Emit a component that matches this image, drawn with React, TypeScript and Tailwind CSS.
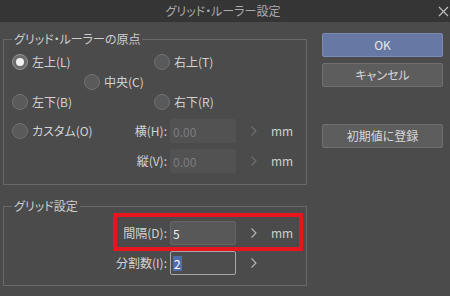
import React from "react";

const font = { fontFamily: '"Noto Sans CJK JP", "Noto Sans", sans-serif' };

function Radio({ label, checked = false }: { label: string; checked?: boolean }) {
  return (
    <div className="flex items-center gap-[4px] h-[20px]">
      <div
        className={
          "w-[16px] h-[16px] rounded-full border flex items-center justify-center " +
          (checked ? "bg-[#6c6c6c] border-[#959595]" : "bg-[#5a5a5a] border-[#717171]")
        }
      >
        {checked && <div className="w-[8px] h-[8px] rounded-full bg-[#f2f2f2]" />}
      </div>
      <span className="text-[12px] leading-[16px] text-[#d2d2d2]">{label}</span>
    </div>
  );
}

function Chevron({ color }: { color: string }) {
  return (
    <svg width="8" height="10" viewBox="0 0 8 10" className="shrink-0">
      <polyline points="1.5,0.5 6,5 1.5,9.5" fill="none" stroke={color} strokeWidth="1.2" />
    </svg>
  );
}

function Field({
  label,
  value,
  mm = true,
  variant,
}: {
  label: string;
  value: string;
  mm?: boolean;
  variant: "disabled" | "normal" | "focused";
}) {
  const box =
    variant === "disabled"
      ? "bg-[#525252] border-[#525252] text-[#7c7c7c]"
      : variant === "normal"
      ? "bg-[#585858] border-[#656565] text-[#f0f0f0]"
      : "bg-[#4d4d4d] border-[#a8a8a8] text-[#ffffff]";
  return (
    <div className="flex items-center h-[24px]">
      <div className="w-[164px] text-right text-[12px] leading-[16px] text-[#d2d2d2] pr-[1px]">
        {label}
      </div>
      <div className={"ml-[2px] w-[66px] h-[24px] border rounded-[2px] flex items-center pl-[2px] text-[12px] " + box}>
        {variant === "focused" ? (
          <span className="bg-[#4f6ea8] px-[1px] leading-[15px]">{value}</span>
        ) : (
          <span className="leading-[15px]">{value}</span>
        )}
      </div>
      <div className="ml-[14px]">
        <Chevron color={variant === "disabled" ? "#6e6e6e" : "#b4b4b4"} />
      </div>
      {mm && <span className="ml-[13px] text-[12px] leading-[16px] text-[#cfcfcf]">mm</span>}
    </div>
  );
}

function Group({ title, children, className = "" }: { title: string; children: React.ReactNode; className?: string }) {
  return (
    <div className={"relative border border-[#686868] " + className}>
      <span className="absolute left-[8px] -top-[9px] px-[2px] bg-[#4b4b4b] text-[12px] leading-[16px] text-[#cdcdcd]">
        {title}
      </span>
      {children}
    </div>
  );
}

export default function App() {
  return (
    <div className="w-[450px] h-[296px] bg-[#4b4b4b] overflow-hidden [font-feature-settings:'palt']" style={font}>
      <div className="h-[22px] bg-[#353535] flex items-center justify-center relative">
        <span className="text-[12px] leading-[16px] text-[#ababab] ml-[-4px]">グリッド・ルーラー設定</span>
        <svg width="11" height="11" viewBox="0 0 11 11" className="absolute right-[1px] top-[6px]">
          <path d="M1 1 L10 10 M10 1 L1 10" stroke="#bdbdbd" strokeWidth="1.2" />
        </svg>
      </div>
      <div className="flex pl-[3px]">
        <div className="w-[304px]">
          <Group title="グリッド・ルーラーの原点" className="mt-[17px] h-[146px] pt-[12px] pl-[8px]">
            <div className="flex">
              <div className="w-[142px]">
                <Radio label="左上(L)" checked />
              </div>
              <Radio label="右上(T)" />
            </div>
            <div className="pl-[72px]">
              <Radio label="中央(C)" />
            </div>
            <div className="flex">
              <div className="w-[142px]">
                <Radio label="左下(B)" />
              </div>
              <Radio label="右下(R)" />
            </div>
            <div className="relative mt-[7px] -ml-[8px]">
              <Field label="横(H):" value="0.00" variant="disabled" />
              <div className="absolute left-[8px] top-[2px]">
                <Radio label="カスタム(O)" />
              </div>
            </div>
            <div className="mt-[6px] -ml-[8px]">
              <Field label="縦(V):" value="0.00" variant="disabled" />
            </div>
          </Group>
          <Group title="グリッド設定" className="mt-[21px] h-[80px] pt-[14px]">
            <Field label="間隔(D):" value="5" variant="normal" />
            <div className="mt-[6px]">
              <Field label="分割数(I):" value="2" mm={false} variant="focused" />
            </div>
            <div className="absolute left-[109px] top-[6px] w-[190px] h-[38px] border-[4px] border-[#e8151f]" />
          </Group>
        </div>
        <div className="ml-[15px] w-[121px] flex flex-col">
          <div className="mt-[11px] h-[24px] bg-[#6678a3] border border-[#7b8bb3] rounded-[2px] flex items-center justify-center text-[12px] text-[#e4e8f0]">
            OK
          </div>
          <div className="mt-[6px] h-[24px] bg-[#5d5d5d] border border-[#6f6f6f] rounded-[2px] flex items-center justify-center text-[12px] text-[#d6d6d6]">
            キャンセル
          </div>
          <div className="mt-[37px] h-[24px] bg-[#5d5d5d] border border-[#6f6f6f] rounded-[2px] flex items-center justify-center text-[12px] text-[#d6d6d6]">
            初期値に登録
          </div>
        </div>
      </div>
    </div>
  );
}
